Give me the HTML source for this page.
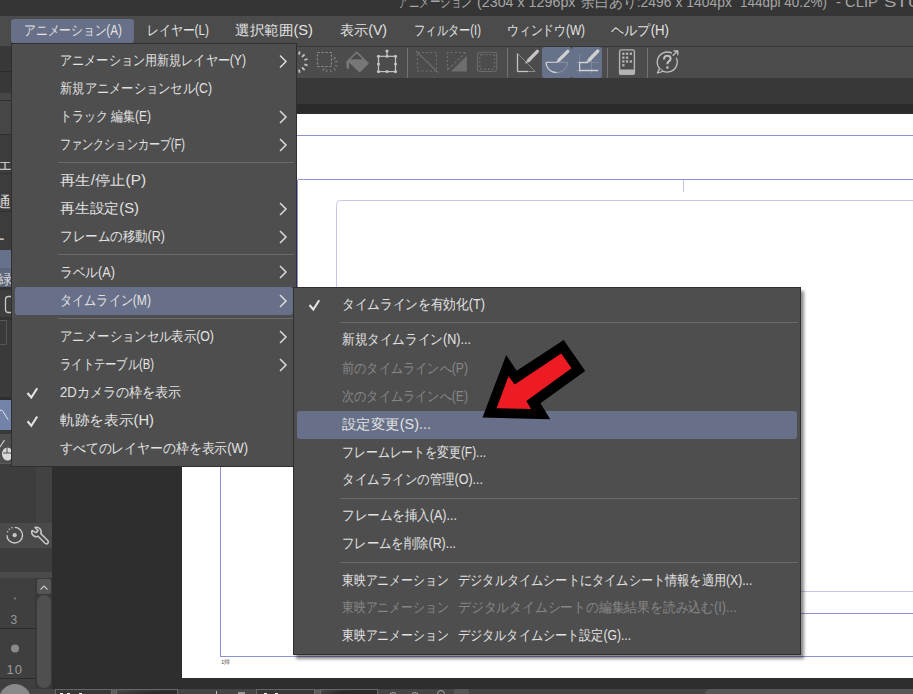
<!DOCTYPE html>
<html><head><meta charset="utf-8">
<style>
*{margin:0;padding:0;box-sizing:border-box}
html,body{width:913px;height:694px;overflow:hidden;background:#2e2e2e;font-family:"Liberation Sans",sans-serif;}
.a{position:absolute}
.t{position:absolute;margin-top:-1px;white-space:nowrap;display:inline-block;transform-origin:0 50%;line-height:20px;height:20px;font-size:14px;color:#e2e2e2}
.dis{color:#868686}
#title{left:0;top:0;width:913px;height:16px;background:#353535;overflow:hidden}
#menubar{left:0;top:16px;width:913px;height:30px;background:#4b4b4b}
#toolbar{left:0;top:46px;width:913px;height:32px;background:#4c4c4c;border-top:1px solid #363636}
#band1{left:0;top:78px;width:913px;height:26px;background:#383838}
#band2{left:0;top:104px;width:913px;height:10px;background:#2b2b2b}
#canvasbg{left:52px;top:113px;width:861px;height:565px;background:#2e2e2e}
#canvas{left:182px;top:114px;width:731px;height:564px;background:#fff}
#bot1{left:0;top:678px;width:913px;height:11px;background:#2d2d2d}
#bot2{left:0;top:689px;width:913px;height:5px;background:#454545}
#left{left:0;top:46px;width:52px;height:643px;background:#3c3c3c}
.pop{background:#4e4e4e;border:1px solid #2f2f2f}
.sep{position:absolute;height:1px;background:#6b6b6b}
.hl{position:absolute;background:#677088;border-radius:3px}
.chev{position:absolute;width:9px;height:12px}
.chk{position:absolute;width:12px;height:10px}
</style></head><body>
<div id="title" class="a">
<span class="t" style="left:398px;top:-7px;font-size:15px;color:#a6a6a6;--w:74px;transform:scaleX(0.704762)">アニメーション</span>
<span class="t" style="left:476.5px;top:-7px;font-size:15px;color:#a6a6a6;--w:98.5px;transform:scaleX(0.95241)">(2304 x 1296px</span>
<span class="t" style="left:581px;top:-7px;font-size:15px;color:#a6a6a6;--w:151px;transform:scaleX(0.928695)">余白あり:2496 x 1404px</span>
<span class="t" style="left:740px;top:-7px;font-size:15px;color:#a6a6a6;--w:87px;transform:scaleX(0.899225)">144dpi 40.2%)</span>
<span class="t" style="left:836px;top:-7px;font-size:15px;color:#a6a6a6;--w:42px;transform:scaleX(0.987872)">- CLIP</span>
<span class="t" style="left:884px;top:-7px;font-size:15px;color:#a6a6a6;--w:70px;transform:scaleX(1.23518)">STUDIO</span>
</div>
<div id="menubar" class="a">
  <div class="hl" style="left:11px;top:3px;width:123px;height:24px"></div>
</div>
<div id="toolbar" class="a"></div>
<svg class="a" style="left:0;top:0" width="913" height="78">
<g stroke="#737373" stroke-width="1" shape-rendering="crispEdges">
<path d="M407.5 48V78M507.5 48V78M607.5 48V78M647.5 48V78"/>
</g>
<rect x="542" y="47" width="60" height="31" rx="2.5" fill="#66718a"/>
<path d="M571.5 47V48.5M571.5 77V78" stroke="#3c3c3c" stroke-width="1.5"/>
<!-- icon1 sparkle -->
<g stroke="#c4c4c4" stroke-width="1.8" stroke-linecap="butt">
<path d="M299.7 51.5L299 54.6"/><path d="M304.6 54.3L302 57"/><path d="M307.5 59.0L304.4 60"/>
<path d="M307.5 65.3L304.4 64.4"/><path d="M304.6 70.2L302 67.4"/><path d="M299.7 72.7L299 69.6"/>
</g>
<!-- icon2 dashed sq + rays -->
<rect x="317.5" y="52.5" width="14" height="14" fill="none" stroke="#8e8e8e" stroke-width="1.1" stroke-dasharray="2.2 1.8"/>
<g stroke="#7e7e7e" stroke-width="1.2">
<path d="M333.6 59.3L335.7 57.3"/><path d="M334.9 61.8L337.5 61.3"/><path d="M334.9 65.5L337.5 66.2"/>
<path d="M333.6 68.3L335.7 70.4"/><path d="M330.5 69.7L331.1 72.1"/><path d="M327 69.7L326.4 72.1"/><path d="M324.4 68.6L322.5 70.5"/>
</g>
<!-- icon3 bucket -->
<path d="M356.2 51.7Q356.8 51.1 357.4 51.7L368.4 62.5Q369.2 63.3 368.4 64.1L360.4 72.1Q359.6 72.9 358.8 72.1L349.2 62.6L349.2 67.6Q348 70.8 346.6 67.6L346.2 62.2Q346.1 61.5 346.7 60.9Z" fill="#777"/>
<path d="M356.8 53.5L350.6 59.2H362.6Z" fill="#4a4a4a"/>
<!-- icon4 transform -->
<g fill="none" stroke="#c4c4c4" stroke-width="1.2"><rect x="378.5" y="56.3" width="17" height="15.3"/><path d="M387 51V56.3"/></g>
<g fill="#c4c4c4"><circle cx="378.5" cy="56.3" r="1.6"/><circle cx="395.5" cy="56.3" r="1.6"/><circle cx="378.5" cy="71.6" r="1.6"/><circle cx="395.5" cy="71.6" r="1.6"/><circle cx="387" cy="56.3" r="1.5"/><circle cx="387" cy="71.6" r="1.5"/><circle cx="378.5" cy="64" r="1.5"/><circle cx="395.5" cy="64" r="1.5"/><circle cx="387" cy="51" r="1.6"/></g>
<!-- icon5 -->
<rect x="417.5" y="52.5" width="19" height="18.5" fill="none" stroke="#6e6e6e" stroke-width="1.1" stroke-dasharray="2.2 2"/>
<path d="M416 51L438 72.6" stroke="#6e6e6e" stroke-width="1.2"/>
<!-- icon6 -->
<path d="M447.5 70.5V52.5H465.7" fill="none" stroke="#6e6e6e" stroke-width="1.1" stroke-dasharray="2.2 2"/>
<path d="M465.7 52.3L447.1 70.5" stroke="#6e6e6e" stroke-width="1.1" stroke-dasharray="2.4 2"/>
<path d="M466.8 55.8V71.6H451Z" fill="#6e6e6e"/>
<!-- icon7 -->
<rect x="477.5" y="52.3" width="19.2" height="19.2" rx="2.5" fill="none" stroke="#6a6a6a" stroke-width="1.1"/>
<rect x="479.8" y="54.6" width="14.7" height="14.7" rx="2.2" fill="none" stroke="#6e6e6e" stroke-width="1.4" stroke-dasharray="1.6 2.1"/>
<!-- icon8 -->
<path d="M517.5 71.5V53.3" stroke="#c4c4c4" stroke-width="1.3"/><path d="M517.5 71.5H528" stroke="#c4c4c4" stroke-width="1.3"/>
<path d="M528 71.5H535.2L517.5 53.3" fill="none" stroke="#8a8a8a" stroke-width="1"/>
<path d="M537.3 51.3L528.5 60.5" stroke="#c4c4c4" stroke-width="3.3" stroke-linecap="round"/><path d="M528.5 60.5L525.5 63.2" stroke="#c4c4c4" stroke-width="1.3"/>
<!-- icon9 -->
<path d="M546 62.3H556.8" stroke="#d0d0d0" stroke-width="1.1"/><path d="M556.8 62.3H567.5" stroke="#8e94a4" stroke-width="1"/>
<path d="M546 62.3A10.8 10.4 0 0 0 556.8 72.7" fill="none" stroke="#d0d0d0" stroke-width="1.2"/>
<path d="M556.8 72.7A10.8 10.4 0 0 0 567.6 62.3" fill="none" stroke="#8e94a4" stroke-width="1"/>
<path d="M567.8 51.3L559 60.2" stroke="#d0d0d0" stroke-width="3.3" stroke-linecap="round"/><path d="M559 60.2L556.5 62.5" stroke="#d0d0d0" stroke-width="1.3"/>
<!-- icon10 -->
<g stroke="#7f879a" stroke-width="1"><path d="M579.6 54V73M591.5 54V73M575.4 62.5H598.2M575.4 70.5H598.2"/></g>
<path d="M588 62.5H579.6V70.5H598.2" fill="none" stroke="#d0d0d0" stroke-width="1.3"/>
<path d="M597.8 51L589.2 60" stroke="#d0d0d0" stroke-width="3.3" stroke-linecap="round"/><path d="M589.2 60L586.5 62.5" stroke="#d0d0d0" stroke-width="1.3"/>
<!-- icon11 -->
<rect x="619.6" y="49.9" width="14.8" height="24.2" rx="1.8" fill="none" stroke="#b4b4b4" stroke-width="1.4"/>
<rect x="619" y="69.6" width="16" height="5.2" rx="1.5" fill="#b4b4b4"/>
<g fill="#b4b4b4"><rect x="622.2" y="52.6" width="2.3" height="2.3"/><rect x="625.9" y="52.6" width="2.3" height="2.3"/><rect x="629.7" y="52.6" width="2.3" height="2.3"/>
<rect x="622.2" y="56.5" width="2.3" height="2.3"/><rect x="625.9" y="56.5" width="2.3" height="2.3"/>
<rect x="622.2" y="60.3" width="2.3" height="2.3"/><rect x="625.9" y="60.3" width="2.3" height="2.3"/><rect x="629.7" y="60.3" width="2.3" height="2.3"/>
<rect x="622.2" y="64.1" width="2.3" height="2.3"/></g>
<!-- icon12 -->
<path d="M676.3 57.8A10 10 0 1 1 671.9 53.2" fill="none" stroke="#bebebe" stroke-width="1.3"/>
<path d="M659.6 68.6L657.4 73L662.8 71.3" fill="#4a4a4a" stroke="#bebebe" stroke-width="1.3" stroke-linejoin="round"/>
<path d="M672.7 55.8L677.6 51M673.6 51H677.8V55.2" fill="none" stroke="#bebebe" stroke-width="1.3"/>
<path d="M664 59.4Q664 55.7 667.3 55.7Q670.6 55.7 670.6 58.6Q670.6 60.5 668.6 61.5Q667.4 62.2 667.4 64.3" fill="none" stroke="#bebebe" stroke-width="2.1"/>
<circle cx="667.4" cy="67.6" r="1.3" fill="#bebebe"/>
</svg>
<div id="band1" class="a"></div>
<div id="band2" class="a"></div>
<div id="canvasbg" class="a"></div>
<div id="canvas" class="a"></div>
<svg class="a" style="left:0;top:0" width="913" height="694">
<g fill="none" shape-rendering="crispEdges">
<path d="M220.5 135.5H913M220.5 135.5V656.5H913" stroke="#9090d4"/>
<path d="M297.5 179.5H913M297.5 179.5V613.5H913" stroke="#9090d4"/>
<path d="M683.5 180V192" stroke="#c4c4e6"/>
</g>
<path d="M913 200.5H341.5Q336.5 200.5 336.5 205.5V586.5Q336.5 591.5 341.5 591.5H913" fill="none" stroke="#c6c6ea"/>
<text x="221" y="664" font-size="6" fill="#555">1帰</text>
</svg>
<div id="bot1" class="a"></div>
<div id="bot2" class="a">
<div class="a" style="left:55px;top:0;width:57px;height:6px;background:#383838;border:1px solid #676767;border-bottom:0"></div>
<div class="a" style="left:60px;top:4px;width:3px;height:2px;background:#eee"></div>
<div class="a" style="left:67px;top:4px;width:3px;height:2px;background:#eee"></div>
<div class="a" style="left:79px;top:4px;width:3px;height:2px;background:#eee"></div>
<div class="a" style="left:112px;top:0;width:4px;height:6px;background:#5c5c5c"></div>
<div class="a" style="left:116px;top:0;width:62px;height:6px;background:linear-gradient(170deg,#4a4a4a 0%,#2c2c2c 60%);border:1px solid #676767;border-bottom:0"></div>
<div class="a" style="left:216px;top:2px;width:1px;height:4px;background:#bbb"></div>
<div class="a" style="left:238px;top:3px;width:7px;height:3px;background:#9a9a9a"></div>
<div class="a" style="left:256px;top:0;width:59px;height:6px;background:#383838;border:1px solid #676767;border-bottom:0"></div>
<div class="a" style="left:264px;top:4px;width:3px;height:2px;background:#eee"></div>
<div class="a" style="left:275px;top:4px;width:3px;height:2px;background:#eee"></div>
<div class="a" style="left:315px;top:0;width:5px;height:6px;background:#5c5c5c"></div>
<div class="a" style="left:320px;top:0;width:58px;height:6px;background:linear-gradient(160deg,#4a4a4a 0%,#2a2a2a 40%);border:1px solid #676767;border-bottom:0"></div>
<div class="a" style="left:389px;top:3px;width:8px;height:8px;border:1px solid #aaa;border-radius:50%"></div>
<div class="a" style="left:411px;top:3px;width:8px;height:8px;border:1px solid #aaa;border-radius:50%"></div>
<div class="a" style="left:437px;top:1px;width:8px;height:8px;border:1px solid #aaa;border-radius:50% 50% 0 0"></div>
<div class="a" style="left:454px;top:0;width:15px;height:6px;background:#555;border-radius:2px 2px 0 0"></div>
<div class="a" style="left:705px;top:0;width:208px;height:6px;background:#575757;border-radius:5px 0 0 0"></div>
</div>
<div id="left" class="a">
<div class="a" style="left:0;top:0;width:52px;height:25px;background:#383838"></div>
<div class="a" style="left:0;top:25px;width:52px;height:1px;background:#2c2c2c"></div>
<div class="a" style="left:0;top:26px;width:52px;height:21px;background:#383838"></div>
<div class="a" style="left:0;top:47px;width:52px;height:7px;background:#474747"></div>
<div class="a" style="left:0;top:54px;width:52px;height:1px;background:#2e2e2e"></div>
<div class="a" style="left:0;top:55px;width:52px;height:33px;background:#464646"></div>
<div class="a" style="left:0;top:88px;width:52px;height:1px;background:#2e2e2e"></div>
<div class="a" style="left:0;top:89px;width:52px;height:38px;background:#3c3c3c"></div>
<div class="a" style="left:0;top:127px;width:52px;height:1px;background:#303030"></div>
<div class="a" style="left:0;top:128px;width:52px;height:37px;background:#3c3c3c"></div>
<div class="a" style="left:0;top:165px;width:52px;height:1px;background:#303030"></div>
<div class="a" style="left:0;top:166px;width:52px;height:38px;background:#3c3c3c"></div>
<div class="a" style="left:0;top:204px;width:52px;height:18px;background:#66718b"></div>
<div class="a" style="left:0;top:222px;width:52px;height:19px;background:#5b657c"></div>
<div class="a" style="left:0;top:241px;width:52px;height:3px;background:#333"></div>
<div class="a" style="left:0;top:244px;width:52px;height:27px;background:#3e3e3e"></div>
<div class="a" style="left:0;top:271px;width:52px;height:3px;background:#333"></div>
<div class="a" style="left:0;top:274px;width:52px;height:77px;background:#3a3a3a"></div>
<div class="a" style="left:0;top:274px;width:7px;height:25px;border:1px solid #555;border-left:0"></div>
<div class="a" style="left:0;top:351px;width:52px;height:3px;background:#2f2f2f"></div>
<div class="a" style="left:0;top:354px;width:52px;height:30px;background:#7282a8"></div>
<div class="a" style="left:0;top:384px;width:52px;height:4px;background:#3a3a3a"></div>
<div class="a" style="left:0;top:388px;width:52px;height:30px;background:#4e4e4e"></div>
<div class="a" style="left:0;top:417px;width:52px;height:1px;background:#5a5a5a"></div>
<div class="a" style="left:0;top:418px;width:52px;height:2px;background:#3c3c3c"></div>
<div class="a" style="left:0;top:420px;width:36px;height:57px;background:#3d3d3d"></div>
<div class="a" style="left:36px;top:420px;width:16px;height:57px;background:#424242"></div>
<div class="a" style="left:0;top:477px;width:52px;height:25px;background:#4a4a4a"></div>
<div class="a" style="left:0;top:502px;width:52px;height:24px;background:#3d3d3d"></div>
<div class="a" style="left:0;top:526px;width:52px;height:6px;background:#4a4a4a"></div>
<div class="a" style="left:0;top:532px;width:35px;height:51px;background:#3f3f3f;border-bottom:1px solid #2c2c2c"></div>
<div class="a" style="left:0;top:583px;width:35px;height:50px;background:#3f3f3f;border-bottom:1px solid #2c2c2c"></div>
<div class="a" style="left:0;top:633px;width:35px;height:10px;background:#3f3f3f"></div>
<div class="a" style="left:35px;top:532px;width:17px;height:111px;background:#393939"></div>
<div class="a" style="left:37px;top:533px;width:14px;height:15px;background:#555;border-radius:2px"></div>
<div class="a" style="left:37px;top:549px;width:14px;height:93px;background:#4f4f4f;border-radius:7px"></div>
</div>
<svg class="a" style="left:0;top:0" width="60" height="694">
<g fill="#d8d8d8" font-size="13" font-family="Liberation Sans,sans-serif">
<text x="-2" y="170" font-size="14">エ</text><text x="-4" y="207" font-size="15">通</text><text x="-8" y="244">ー</text><text x="-2" y="284" font-size="14">緑</text>
</g>
<rect x="5.5" y="296.5" width="9" height="16" rx="3" fill="none" stroke="#c8c8c8" stroke-width="1.3"/>
<path d="M0 410.5Q1.5 409 3 411.5L8.2 419.8" fill="none" stroke="#e6e6e6" stroke-width="1"/>
<path d="M0 447L4.5 440" stroke="#d0d0d0" stroke-width="1.2"/>
<path d="M11 449A5.5 6.5 0 1 0 11 459Z" fill="#d8d8d8"/><path d="M3 453H11M7 446V453" stroke="#4e4e4e" stroke-width="1"/>
<path d="M14.7 527.4A7.8 7.8 0 1 1 6.9 535.2" fill="none" stroke="#c8c8c8" stroke-width="1.4"/>
<g fill="#c8c8c8"><circle cx="7.6" cy="531.8" r="0.8"/><circle cx="9.4" cy="529.3" r="0.8"/><circle cx="11.9" cy="527.8" r="0.8"/></g>
<circle cx="14.7" cy="535.2" r="2.1" fill="#c8c8c8"/>
<path transform="translate(-1.5,0)" d="M33.5 530.5A4.6 4.6 0 0 0 39.6 536.3L46.3 543Q48 544.6 49.3 543.3Q50.6 542 49 540.3L42.3 533.6A4.6 4.6 0 0 0 36.5 527.5L39.6 530.6L37.6 532.6Z" fill="none" stroke="#c8c8c8" stroke-width="1.5" stroke-linejoin="round"/>
<circle cx="15" cy="598.5" r="0.9" fill="#8a8a8a"/>
<text x="10.5" y="624" font-size="12" fill="#9a9a9a">3</text>
<circle cx="15" cy="648.5" r="4" fill="#8a8a8a"/>
<text x="6.5" y="674" font-size="13" letter-spacing="1" fill="#9a9a9a">10</text>
<circle cx="15" cy="700" r="16" fill="#8a8a8a"/>
<path d="M40.5 589.5L44 586L47.5 589.5" fill="none" stroke="#c8c8c8" stroke-width="1.1"/>
</svg>

<!-- menubar text -->
<span class="t" style="left:24px;top:21px;--w:98px;transform:scaleX(0.839963)">アニメーション(A)</span>
<span class="t" style="left:147px;top:21px;--w:62px;transform:scaleX(0.847863)">レイヤー(L)</span>
<span class="t" style="left:235px;top:21px;--w:78px;transform:scaleX(1.04457)">選択範囲(S)</span>
<span class="t" style="left:340px;top:21px;--w:47px;transform:scaleX(1.00703)">表示(V)</span>
<span class="t" style="left:414px;top:21px;--w:67px;transform:scaleX(0.805107)">フィルター(I)</span>
<span class="t" style="left:507px;top:21px;--w:78px;transform:scaleX(0.842816)">ウィンドウ(W)</span>
<span class="t" style="left:611px;top:21px;--w:58px;transform:scaleX(0.944049)">ヘルプ(H)</span>

<!-- popup 1 -->
<div class="a pop" style="left:11px;top:43px;width:286px;height:424px"></div>
<div class="sep" style="left:58px;top:162px;width:236px"></div>
<div class="sep" style="left:58px;top:254px;width:236px"></div>
<div class="sep" style="left:58px;top:318px;width:236px"></div>
<div class="hl" style="left:15px;top:287px;width:278px;height:28px"></div>
<span class="t" style="left:60px;top:51px;--w:186px;transform:scaleX(0.866439)">アニメーション用新規レイヤー(Y)</span>
<span class="t" style="left:60px;top:79px;--w:152px;transform:scaleX(0.876396)">新規アニメーションセル(C)</span>
<span class="t" style="left:60px;top:107px;--w:91px;transform:scaleX(0.853959)">トラック 編集(E)</span>
<span class="t" style="left:60px;top:135px;--w:125px;transform:scaleX(0.791687)">ファンクションカーブ(F)</span>
<span class="t" style="left:60px;top:171px;--w:86px;transform:scaleX(1.09467)">再生/停止(P)</span>
<span class="t" style="left:60px;top:199px;--w:79px;transform:scaleX(1.05796)">再生設定(S)</span>
<span class="t" style="left:60px;top:227px;--w:105px;transform:scaleX(0.894093)">フレームの移動(R)</span>
<span class="t" style="left:60px;top:263px;--w:55px;transform:scaleX(0.906516)">ラベル(A)</span>
<span class="t" style="left:60px;top:291px;--w:91px;transform:scaleX(0.866667)">タイムライン(M)</span>
<span class="t" style="left:60px;top:327px;--w:154px;transform:scaleX(0.883946)">アニメーションセル表示(O)</span>
<span class="t" style="left:60px;top:355px;--w:94px;transform:scaleX(0.805678)">ライトテーブル(B)</span>
<span class="t" style="left:60px;top:383px;--w:121px;transform:scaleX(0.931441)">2Dカメラの枠を表示</span>
<span class="t" style="left:60px;top:411px;--w:94px;transform:scaleX(1.05101)">軌跡を表示(H)</span>
<span class="t" style="left:60px;top:439px;--w:188px;transform:scaleX(0.919105)">すべてのレイヤーの枠を表示(W)</span>

<!-- popup 2 -->
<div class="a pop" style="left:293px;top:287px;width:508px;height:368px;box-shadow:3px 4px 3px rgba(0,0,0,.45)"></div>
<div class="sep" style="left:340px;top:322px;width:458px"></div>
<div class="sep" style="left:340px;top:498px;width:458px"></div>
<div class="sep" style="left:340px;top:562px;width:458px"></div>
<div class="hl" style="left:297px;top:411px;width:500px;height:28px"></div>
<span class="t" style="left:342px;top:295px;--w:143px;transform:scaleX(0.90569)">タイムラインを有効化(T)</span>
<span class="t" style="left:342px;top:330px;--w:129px;transform:scaleX(0.901408)">新規タイムライン(N)...</span>
<span class="t dis" style="left:342px;top:359px;--w:126px;transform:scaleX(0.870936)">前のタイムラインへ(P)</span>
<span class="t dis" style="left:342px;top:387px;--w:126px;transform:scaleX(0.870936)">次のタイムラインへ(E)</span>
<span class="t" style="left:342px;top:415px;--w:89px;transform:scaleX(1.03076)">設定変更(S)...</span>
<span class="t" style="left:342px;top:443px;--w:144px;transform:scaleX(0.849323)">フレームレートを変更(F)...</span>
<span class="t" style="left:342px;top:470px;--w:141px;transform:scaleX(0.893023)">タイムラインの管理(O)...</span>
<span class="t" style="left:342px;top:506px;--w:115px;transform:scaleX(0.896031)">フレームを挿入(A)...</span>
<span class="t" style="left:342px;top:534px;--w:114px;transform:scaleX(0.882972)">フレームを削除(R)...</span>
<span class="t" style="left:342px;top:571px;--w:106.4px;transform:scaleX(0.844444)">東映アニメーション</span><span class="t" style="left:458px;top:571px;--w:294.4px;transform:scaleX(0.870121)">デジタルタイムシートにタイムシート情報を適用(X)...</span>
<span class="t dis" style="left:342px;top:598px;--w:106.4px;transform:scaleX(0.844444)">東映アニメーション</span><span class="t dis" style="left:458px;top:598px;--w:278.7px;transform:scaleX(0.914098)">デジタルタイムシートの編集結果を読み込む(I)...</span>
<span class="t" style="left:342px;top:626px;--w:106.4px;transform:scaleX(0.844444)">東映アニメーション</span><span class="t" style="left:458px;top:626px;--w:173.1px;transform:scaleX(0.865974)">デジタルタイムシート設定(G)...</span>

<svg class="a" style="left:0;top:0" width="913" height="694">
<g fill="none" stroke="#e4e4e4" stroke-width="2.1" stroke-linecap="butt" stroke-linejoin="miter">
<path d="M27.5 393L31.3 397.5L37.2 388.3"/>
<path d="M27.5 421.2L31.3 425.7L37.2 416.5"/>
<path d="M309.5 305L313.3 309.5L319.2 300.3"/>
</g>
<g fill="none" stroke="#dadada" stroke-width="1.5">
<path d="M280 55.5L286 61.5L280 67.5"/>
<path d="M280 111L286 117L280 123"/>
<path d="M280 139L286 145L280 151"/>
<path d="M280 203L286 209L280 215"/>
<path d="M280 231L286 237L280 243"/>
<path d="M280 266L286 272L280 278"/>
<path d="M280 295L286 301L280 307"/>
<path d="M280 331L286 337L280 343"/>
<path d="M280 359L286 365L280 371"/>
</g>
<polygon points="563.7,339.9 585.2,371.1 540.4,403.2 550.3,419.2 482.5,417.6 506.2,354.9 516.7,370.8" fill="#000"/>
<polygon points="561.2,353.5 571.5,368.3 526.3,400.9 531.1,409.1 496.6,408.3 508.5,376.3 514.7,384.5" fill="#ed1c24"/>
</svg>
<script>
document.querySelectorAll('.t').forEach(function(e){
  var w=parseFloat(getComputedStyle(e).getPropertyValue('--w'));
  if(w){var o=e.style.transform;e.style.transform='none';var n=e.getBoundingClientRect().width; e.style.transform=(n>0)?'scaleX('+(w/n)+')':o;}
});
</script>
</body></html>
